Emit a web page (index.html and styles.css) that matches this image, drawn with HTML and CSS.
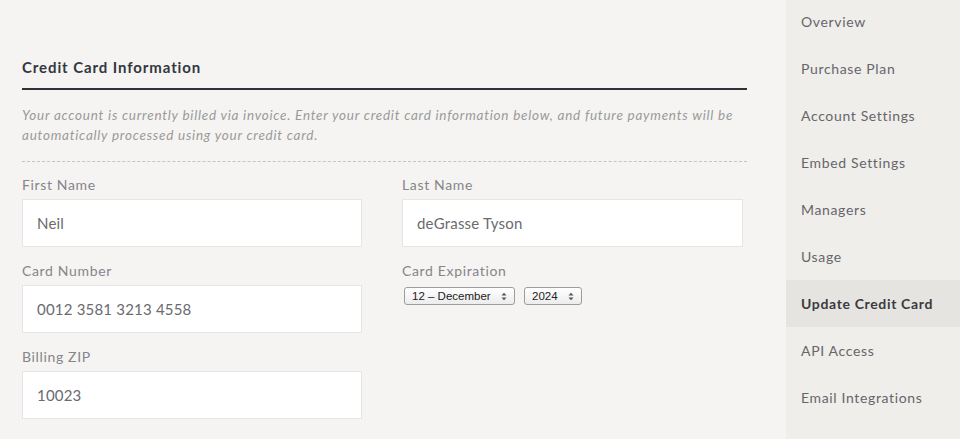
FILE: index.html
```html
<!DOCTYPE html>
<html>
<head>
<meta charset="utf-8">
<link rel="stylesheet" href="styles.css">
</head>
<body>
<div class="page">
  <main class="main">
    <h2 class="heading">Credit Card Information</h2>
    <p class="intro">Your account is currently billed via invoice. Enter your credit card information below, and future payments will be automatically processed using your credit card.</p>
    <form class="form">
      <div class="field">
        <label class="label">First Name</label>
        <div class="input">Neil</div>
      </div>
      <div class="field">
        <label class="label">Last Name</label>
        <div class="input">deGrasse Tyson</div>
      </div>
      <div class="field">
        <label class="label">Card Number</label>
        <div class="input">0012 3581 3213 4558</div>
      </div>
      <div class="field">
        <label class="label">Card Expiration</label>
        <div class="selects">
          <span class="select month">12 – December
            <svg class="arrows" width="6" height="9" viewBox="0 0 6 9"><path d="M0.5 3.5 L3 0.8 L5.5 3.5 Z M0.5 5.5 L3 8.2 L5.5 5.5 Z" fill="#555"/></svg>
          </span>
          <span class="select year">2024
            <svg class="arrows" width="6" height="9" viewBox="0 0 6 9"><path d="M0.5 3.5 L3 0.8 L5.5 3.5 Z M0.5 5.5 L3 8.2 L5.5 5.5 Z" fill="#555"/></svg>
          </span>
        </div>
      </div>
      <div class="field">
        <label class="label">Billing ZIP</label>
        <div class="input">10023</div>
      </div>
    </form>
  </main>
  <aside class="sidebar">
    <ul class="nav">
      <li class="nav-item">Overview</li>
      <li class="nav-item">Purchase Plan</li>
      <li class="nav-item">Account Settings</li>
      <li class="nav-item">Embed Settings</li>
      <li class="nav-item">Managers</li>
      <li class="nav-item">Usage</li>
      <li class="nav-item active">Update Credit Card</li>
      <li class="nav-item">API Access</li>
      <li class="nav-item">Email Integrations</li>
    </ul>
  </aside>
</div>
</body>
</html>
```
FILE: styles.css
```css
* { box-sizing: border-box; }
html, body {
  margin: 0;
  padding: 0;
  height: 100%;
  overflow: hidden;
}
body {
  font-family: Lato, "Open Sans", sans-serif;
  background: #f5f4f2;
  color: #666;
}
.page {
  display: flex;
  height: 439px;
}
.main {
  width: 786px;
  padding: 0 39px 0 22px;
}
.heading {
  margin: 0;
  padding: 57px 0 11px;
  font-size: 15px;
  line-height: 20px;
  font-weight: 700;
  color: #333740;
  letter-spacing: 0.9px;
  border-bottom: 2px solid #2f3038;
}
.intro {
  margin: 15px 0 0;
  padding-bottom: 16px;
  font-size: 13.5px;
  line-height: 20px;
  font-style: italic;
  color: #9a9a9a;
  letter-spacing: 0.75px;
  border-bottom: 1px dashed #c4c4c4;
}
.form {
  display: grid;
  grid-template-columns: 340px 341px;
  column-gap: 40px;
  row-gap: 14px;
  padding-top: 13px;
}
.label {
  display: block;
  font-size: 14px;
  line-height: 20px;
  color: #85858a;
  letter-spacing: 0.65px;
  margin-bottom: 4px;
}
.input {
  height: 48px;
  background: #fff;
  border: 1px solid #e6e5e3;
  padding: 0 14px;
  display: flex;
  align-items: center;
  font-size: 15px;
  color: #6a6a70;
  letter-spacing: 0.2px;
}
.selects {
  display: flex;
  gap: 9px;
  padding-top: 2px;
  padding-left: 2px;
}
.select {
  position: relative;
  height: 18px;
  border: 1px solid #9c9c9c;
  border-radius: 3px;
  background: linear-gradient(#ffffff, #ececec);
  font-size: 11.5px;
  line-height: 16px;
  color: #222;
  padding-left: 7px;
  font-family: "Liberation Sans", Arial, sans-serif;
}
.select.month { width: 111px; }
.select.year { width: 58px; }
.arrows {
  position: absolute;
  right: 7px;
  top: 4px;
}
.sidebar {
  width: 174px;
  background: #efeeeb;
}
.nav {
  list-style: none;
  margin: -2px 0 0;
  padding: 0;
}
.nav-item {
  height: 47px;
  line-height: 47px;
  padding-left: 15px;
  font-size: 14px;
  color: #66666a;
  letter-spacing: 0.65px;
}
.nav-item.active {
  background: #e5e4e1;
  font-weight: 700;
  color: #3a3a40;
}
```
